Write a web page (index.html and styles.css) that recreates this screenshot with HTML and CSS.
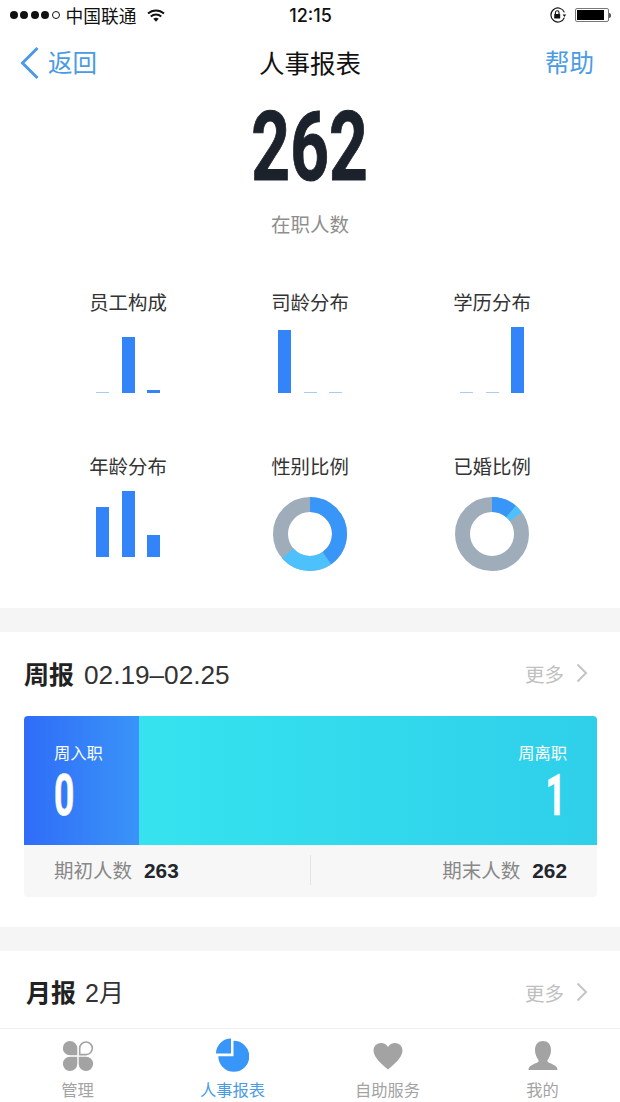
FILE: index.html
```html
<!DOCTYPE html>
<html lang="zh-CN">
<head>
    <meta charset="UTF-8">
    <meta name="viewport" content="width=device-width, initial-scale=1.0">
    <title>人事报表</title>
    <link rel="stylesheet" href="styles.css">
</head>
<body>
<div class="page">
    <div class="statusbar">
        <div class="status-left">
            <span class="sig"></span><span class="sig"></span><span class="sig"></span><span class="sig"></span><span class="sig off"></span>
            <span class="carrier">中国联通</span>
            <svg class="wifi" width="18" height="13" viewBox="0 0 18 13">
                <path d="M1 4.600C5.500.4 12.500.4 17 4.600" fill="none" stroke="#111" stroke-width="2"/>
                <path d="M3.800 7.400c3-2.700 7.400-2.700 10.400 0" fill="none" stroke="#111" stroke-width="2"/>
                <path d="M6.300 9.800c1.600-1.300 3.800-1.300 5.400 0L9 12.800z" fill="#111"/>
            </svg>
        </div>
        <div class="status-time">12:15</div>
        <div class="status-right">
            <svg width="18" height="16" viewBox="0 0 18 16">
                <path d="M15.400 10.600A7 7 0 1 1 15.400 5.400" fill="none" stroke="#111" stroke-width="1.200"/>
                <path d="M13.600 7.600h3.600l-1.800 2.400z" fill="#111"/>
                <rect x="5.200" y="7" width="6" height="4.600" rx=".6" fill="#111"/>
                <path d="M6.400 7V5.600a1.800 1.800 0 0 1 3.600 0V7" fill="none" stroke="#111" stroke-width="1.100"/>
            </svg>
            <div class="battery"><div class="battery-fill"></div></div>
            <div class="battery-nub"></div>
        </div>
    </div>

    <div class="navbar">
        <div class="nav-back">
            <svg width="20" height="34" viewBox="0 0 20 34"><path d="M17.500 2 2.500 17l15 15" fill="none" stroke="#4a9be4" stroke-width="3"/></svg>
            <span>返回</span>
        </div>
        <div class="nav-title">人事报表</div>
        <div class="nav-help">帮助</div>
    </div>

    <div class="hero">
        <div class="hero-num"><span>262</span></div>
        <div class="hero-label">在职人数</div>
    </div>

    <div class="chart-grid">
        <div class="cell">
            <div class="cell-title">员工构成</div>
            <div class="bars">
                <div class="bar b-1"></div><div class="bar b-56"></div><div class="bar b-3"></div>
            </div>
        </div>
        <div class="cell">
            <div class="cell-title">司龄分布</div>
            <div class="bars">
                <div class="bar b-63"></div><div class="bar b-1"></div><div class="bar b-1"></div>
            </div>
        </div>
        <div class="cell">
            <div class="cell-title">学历分布</div>
            <div class="bars">
                <div class="bar b-1"></div><div class="bar b-1"></div><div class="bar b-66"></div>
            </div>
        </div>
        <div class="cell">
            <div class="cell-title">年龄分布</div>
            <div class="bars">
                <div class="bar b-50"></div><div class="bar b-66"></div><div class="bar b-22"></div>
            </div>
        </div>
        <div class="cell">
            <div class="cell-title">性别比例</div>
            <svg class="donut" width="74" height="74" viewBox="0 0 74 74">
                <g transform="rotate(-90 37 37)" fill="none" stroke-width="15">
                    <circle cx="37" cy="37" r="29.500" stroke="#9fadbb"/>
                    <circle cx="37" cy="37" r="29.500" stroke="#4cc1fd" pathLength="360" stroke-dasharray="84 360" stroke-dashoffset="-145"/>
                    <circle cx="37" cy="37" r="29.500" stroke="#3796f8" pathLength="360" stroke-dasharray="145 360"/>
                </g>
            </svg>
        </div>
        <div class="cell">
            <div class="cell-title">已婚比例</div>
            <svg class="donut" width="74" height="74" viewBox="0 0 74 74">
                <g transform="rotate(-90 37 37)" fill="none" stroke-width="15">
                    <circle cx="37" cy="37" r="29.500" stroke="#9fadbb"/>
                    <circle cx="37" cy="37" r="29.500" stroke="#4cc1fd" pathLength="360" stroke-dasharray="14 360" stroke-dashoffset="-40"/>
                    <circle cx="37" cy="37" r="29.500" stroke="#3796f8" pathLength="360" stroke-dasharray="40 360"/>
                </g>
            </svg>
        </div>
    </div>

    <div class="band"></div>

    <div class="report">
        <div class="report-head">
            <div class="report-title"><b>周报</b><span>02.19–02.25</span></div>
            <div class="more">更多
                <svg width="12" height="20" viewBox="0 0 12 20"><path d="M1.500 1.500 10 10l-8.500 8.500" fill="none" stroke="#c4c4c4" stroke-width="2"/></svg>
            </div>
        </div>
        <div class="card">
            <div class="card-top">
                <div class="card-in">
                    <div class="card-label">周入职</div>
                    <div class="card-num"><span>0</span></div>
                </div>
                <div class="card-out">
                    <div class="card-label">周离职</div>
                    <div class="card-num"><span>1</span></div>
                </div>
            </div>
            <div class="card-stats">
                <div class="stat">期初人数<b>263</b></div>
                <div class="stat-line"></div>
                <div class="stat stat-right">期末人数<b>262</b></div>
            </div>
        </div>
    </div>

    <div class="band"></div>

    <div class="report report-month">
        <div class="report-head">
            <div class="report-title month"><b>月报</b><span>2月</span></div>
            <div class="more">更多
                <svg width="12" height="20" viewBox="0 0 12 20"><path d="M1.500 1.500 10 10l-8.500 8.500" fill="none" stroke="#c4c4c4" stroke-width="2"/></svg>
            </div>
        </div>
    </div>

    <div class="tabbar">
        <div class="tab">
            <svg width="32" height="32" viewBox="0 0 32 32">
                <path d="M8 1a7.300 7.300 0 0 1 7.300 7.300v7H8A7.150 7.150 0 0 1 8 1z" fill="#a3a3a3"/>
                <path d="M24 2a6.300 6.300 0 0 1 0 12.600h-6.300V8.300A6.300 6.300 0 0 1 24 2z" fill="none" stroke="#a3a3a3" stroke-width="1.600"/>
                <path d="M8 31a7.150 7.150 0 0 1 0-14.300h7.300V24A7.300 7.300 0 0 1 8 31z" fill="#a3a3a3"/>
                <path d="M24 31a7.300 7.300 0 0 1-7.300-7v-7.300H24A7.150 7.150 0 0 1 24 31z" fill="#a3a3a3"/>
            </svg>
            <div class="tab-label">管理</div>
        </div>
        <div class="tab active">
            <svg class="pie" width="34" height="34" viewBox="0 0 34 34">
                <path d="M16 .5v15H1A15 15 0 0 1 16 .5z" fill="#3796f8"/>
                <path d="M18.500 2.800A15.500 15.500 0 1 1 3.300 18.300h15.200z" fill="#3796f8"/>
            </svg>
            <div class="tab-label">人事报表</div>
        </div>
        <div class="tab">
            <svg width="32" height="32" viewBox="0 0 32 32">
                <path d="M16 29.500C11 25 1.500 18 1.500 10.500 1.500 6 5 3 9 3c3 0 5.500 1.500 7 4 1.500-2.500 4-4 7-4 4 0 7.500 3 7.500 7.500C30.500 18 21 25 16 29.500z" fill="#a3a3a3"/>
            </svg>
            <div class="tab-label">自助服务</div>
        </div>
        <div class="tab">
            <svg width="32" height="32" viewBox="0 0 32 32">
                <path d="M8 10c0-6 3.500-9 8-9s8 3 8 9c0 4-1.500 7.500-3.500 10-.5 1 0 2 1.500 2.700 4 1.600 8.500 3 8.500 7.300H1.500c0-4.300 4.500-5.700 8.500-7.300 1.500-.7 2-1.700 1.500-2.700C9.500 17.500 8 14 8 10z" fill="#a3a3a3"/>
            </svg>
            <div class="tab-label">我的</div>
        </div>
    </div>
</div>
</body>
</html>
```

FILE: styles.css
```css
html, body { margin: 0; padding: 0; background: #fff; }
body { font-family: "Liberation Sans", "Noto Sans CJK SC", sans-serif; color: #222; }
.page { width: 620px; height: 1102px; overflow: hidden; display: flex; flex-direction: column; }

/* status bar */
.statusbar { height: 30px; flex: none; display: flex; align-items: center; justify-content: space-between; padding: 0 9px 0 10px; }
.status-left { display: flex; align-items: center; width: 200px; }
.sig { width: 8px; height: 8px; border-radius: 50%; background: #111; margin-right: 2.400px; box-sizing: border-box; }
.sig.off { background: none; border: 1px solid #111; }
.carrier { font-size: 17.750px; margin-left: 3.600px; color: #111; }
.wifi { margin-left: 10px; }
.status-time { font-family: Inter, "Liberation Sans", sans-serif; font-size: 18px; font-weight: 500; color: #111; }
.status-right { display: flex; align-items: center; width: 200px; justify-content: flex-end; }
.battery { width: 34px; height: 14px; border: 1px solid #777; box-sizing: border-box; border-radius: 2px; padding: 1px; margin-left: 8px; }
.battery-fill { height: 100%; width: 27px; background: #000; }
.battery-nub { width: 2px; height: 5px; background: #555; border-radius: 0 2px 2px 0; }

/* nav */
.navbar { height: 66px; flex: none; display: flex; align-items: center; justify-content: space-between; padding: 0 26px 0 20px; }
.nav-back { display: flex; align-items: center; width: 166px; color: #4a9be4; font-size: 24.500px; }
.nav-back span { margin-left: 8px; padding-bottom: 3px; }
.nav-title { font-size: 25.500px; color: #111; padding-bottom: 4px; }
.nav-help { width: 160px; text-align: right; color: #4a9be4; font-size: 24.500px; padding-bottom: 3px; }

/* hero number */
.hero { flex: none; padding-top: 14px; text-align: center; }
.hero-num { height: 74px; line-height: 74px; font-family: Roboto, "Liberation Sans", sans-serif; font-size: 96px; font-weight: bold; color: #1c222b; }
.hero-num span { display: inline-block; transform: scaleX(.705); -webkit-text-stroke: 1px #1c222b; }
.hero-label { margin-top: 28px; line-height: 26px; font-size: 19.500px; color: #8e8e8e; }

/* charts */
.chart-grid { flex: none; height: 370px; box-sizing: border-box; padding: 51.500px 37px 0; display: grid; grid-template-columns: repeat(3, 1fr); grid-auto-rows: 164px; }
.cell { display: flex; flex-direction: column; align-items: center; }
.cell-title { line-height: 26px; font-size: 19.400px; color: #333; }
.bars { height: 77.500px; width: 64px; display: flex; align-items: flex-end; justify-content: space-between; }
.bar { width: 13px; background: #3384f8; }
.b-1 { height: 1px; background: #a9c9f8; }
.b-3 { height: 3px; }
.b-22 { height: 22px; }
.b-50 { height: 50px; }
.b-56 { height: 56px; }
.b-63 { height: 63px; }
.b-66 { height: 66px; }
.donut { margin-top: 17.500px; display: block; }

.band { height: 24px; flex: none; background: #f5f5f5; }

/* report sections */
.report { flex: none; padding: 0 23px 30px 24px; }
.report-month { padding-bottom: 0; height: 77px; }
.report-head { height: 82px; padding-bottom: 2px; display: flex; align-items: center; justify-content: space-between; }
.report-month .report-head { height: 79px; padding-bottom: 0; }
.report-title { display: flex; align-items: baseline; font-size: 26.200px; color: #333; }
.report-title b { font-size: 25px; margin-right: 10px; color: #222; }
.report-title.month { margin-left: 2px; font-size: 25px; }
.report-title.month b { margin-right: 9px; }
.more { display: flex; align-items: center; font-size: 19.500px; color: #c0c0c0; padding-right: 9px; }
.report-month .more { padding-top: 3px; }
.more svg { margin-left: 12px; }
.card { border-radius: 4px; overflow: hidden; }
.card-top { height: 129px; display: flex; color: #fff; }
.card-in { width: 85px; padding: 0 0 0 30px; background: linear-gradient(90deg, #2f6cf8, #3a94f8); }
.card-out { flex: 1; text-align: right; padding-right: 30px; background: linear-gradient(90deg, #35e3ee, #2fcfea); }
.card-label { font-size: 16.300px; line-height: 20px; margin-top: 27px; }
.card-num { font-family: Roboto, "Liberation Sans", sans-serif; font-size: 57px; font-weight: bold; line-height: 42px; margin-top: 12px; }
.card-num span { display: inline-block; transform: scaleX(.62); transform-origin: 0 50%; -webkit-text-stroke: .7px #fff; }
.card-out .card-num { padding-right: 1px; }
.card-out .card-num span { transform-origin: 100% 50%; }
.card-stats { height: 49px; padding: 0 30px 3px; background: #f7f7f7; display: flex; align-items: center; font-size: 19.500px; color: #888; }
.stat { flex: 1; }
.stat b { margin-left: 12px; font-size: 20.800px; color: #23262d; }
.stat-right { text-align: right; }
.stat-line { width: 1px; height: 30px; background: #e4e4e4; }

/* tabs */
.tabbar { height: 74px; flex: none; box-sizing: border-box; border-top: 1px solid #eee; display: flex; background: #fff; }
.tab { flex: 1; display: flex; flex-direction: column; align-items: center; justify-content: flex-end; color: #a3a3a3; }
.tab svg { display: block; }
.tab .pie { margin-left: -2px; }
.tab.active { color: #4a9be4; }
.tab-label { font-size: 16.300px; line-height: 22px; margin: 7px 0 1px; }
```
